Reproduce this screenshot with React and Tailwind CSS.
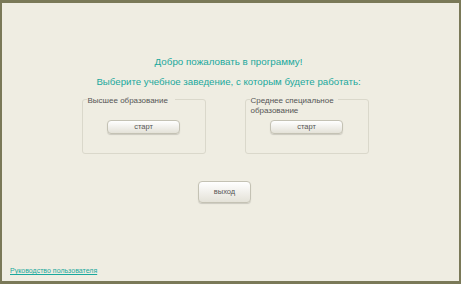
import React from "react";

const Btn = ({ label, className = "" }) => (
  <button
    className={`rounded-[4px] border border-[#c4c2b4] bg-gradient-to-b from-white to-[#e4e2d8] text-[7.5px] leading-none text-[#555] shadow-[0_1px_1px_rgba(0,0,0,0.15)] ${className}`}
  >
    {label}
  </button>
);

const Group = ({ legend }) => (
  <div className="relative w-[124px] h-[55px] rounded-[3px] border border-[#dad8cb]">
    <span className="absolute left-[4px] -top-[4px] w-[88px] bg-[#efede2] px-[1px] text-[8px] leading-[10px] text-[#555]">
      {legend}
    </span>
    <div className="flex justify-center pt-[20px]">
      <Btn label="старт" className="w-[73px] h-[14px]" />
    </div>
  </div>
);

export default function App() {
  return (
    <div
      className="w-[461px] h-[284px] border-t-[3px] border-b-[3px] border-l-2 border-r-2 border-[#7a7958] bg-[#efede2] flex flex-col"
      style={{ fontFamily: '"Liberation Sans", Arial, sans-serif' }}
    >
      <div className="flex flex-col items-center pt-[53px] pr-[4px] text-[#1aa89c]">
        <h1 className="text-[9.8px] leading-[12px]">Добро пожаловать в программу!</h1>
        <h2 className="mt-[8px] text-[9.7px] leading-[12px]">
          Выберите учебное заведение, с которым будете работать:
        </h2>
      </div>
      <div className="flex items-start justify-center gap-[39px] mt-[11px] pr-[11px]">
        <Group legend="Высшее образование" />
        <Group legend="Среднее специальное образование" />
      </div>
      <div className="flex justify-center mt-[27px] pr-[12px]">
        <Btn label="выход" className="w-[53px] h-[22px]" />
      </div>
      <div className="mt-auto pb-[1px] pl-[8px]">
        <a href="#" className="text-[7px] text-[#1aa89c] underline">
          Руководство пользователя
        </a>
      </div>
    </div>
  );
}
